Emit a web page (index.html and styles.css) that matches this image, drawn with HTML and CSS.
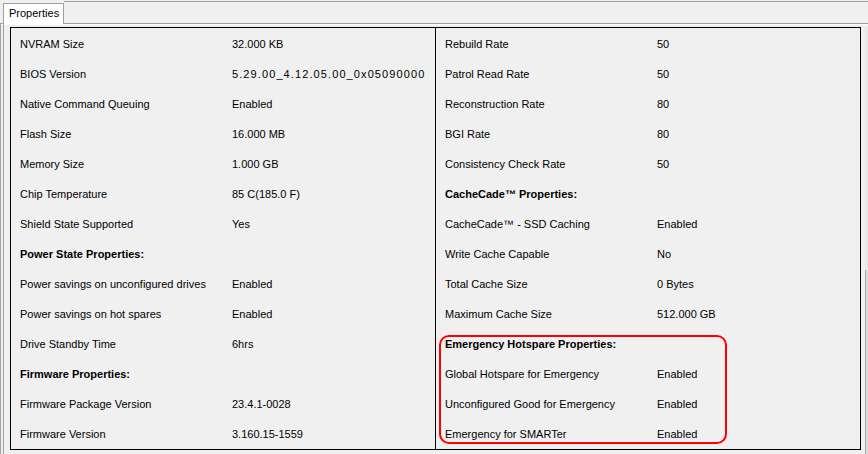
FILE: index.html
```html
<!DOCTYPE html>
<html>
<head>
  <meta charset="utf-8">
  <link rel="stylesheet" href="styles.css">
</head>
<body>
  <div class="tabs">
    <div class="tab">Properties</div>
    <div class="tab-fill"></div>
  </div>
  <div class="frame">
    <div class="frame-in">
      <div class="panel">
        <div class="col">
          <div class="row"><span class="key">NVRAM Size</span><span>32.000 KB</span></div>
          <div class="row"><span class="key">BIOS Version</span><span class="wide">5.29.00_4.12.05.00_0x05090000</span></div>
          <div class="row"><span class="key">Native Command Queuing</span><span>Enabled</span></div>
          <div class="row"><span class="key">Flash Size</span><span>16.000 MB</span></div>
          <div class="row"><span class="key">Memory Size</span><span>1.000 GB</span></div>
          <div class="row"><span class="key">Chip Temperature</span><span>85 C(185.0 F)</span></div>
          <div class="row"><span class="key">Shield State Supported</span><span>Yes</span></div>
          <div class="row head">Power State Properties:</div>
          <div class="row"><span class="key">Power savings on unconfigured drives</span><span>Enabled</span></div>
          <div class="row"><span class="key">Power savings on hot spares</span><span>Enabled</span></div>
          <div class="row"><span class="key">Drive Standby Time</span><span>6hrs</span></div>
          <div class="row head">Firmware Properties:</div>
          <div class="row"><span class="key">Firmware Package Version</span><span>23.4.1-0028</span></div>
          <div class="row"><span class="key">Firmware Version</span><span>3.160.15-1559</span></div>
        </div>
        <div class="col right">
          <div class="row"><span class="key">Rebuild Rate</span><span>50</span></div>
          <div class="row"><span class="key">Patrol Read Rate</span><span>50</span></div>
          <div class="row"><span class="key">Reconstruction Rate</span><span>80</span></div>
          <div class="row"><span class="key">BGI Rate</span><span>80</span></div>
          <div class="row"><span class="key">Consistency Check Rate</span><span>50</span></div>
          <div class="row head">CacheCade™ Properties:</div>
          <div class="row"><span class="key">CacheCade™ - SSD Caching</span><span>Enabled</span></div>
          <div class="row"><span class="key">Write Cache Capable</span><span>No</span></div>
          <div class="row"><span class="key">Total Cache Size</span><span>0 Bytes</span></div>
          <div class="row"><span class="key">Maximum Cache Size</span><span>512.000 GB</span></div>
          <div class="row head">Emergency Hotspare Properties:</div>
          <div class="row"><span class="key">Global Hotspare for Emergency</span><span>Enabled</span></div>
          <div class="row"><span class="key">Unconfigured Good for Emergency</span><span>Enabled</span></div>
          <div class="row"><span class="key">Emergency for SMARTer</span><span>Enabled</span></div>
        </div>
        <div class="mark"></div>
      </div>
      <div class="scroll"><div class="thumb"></div></div>
    </div>
  </div>
</body>
</html>
```

FILE: styles.css
```css
html {background: #f0f0f0;}
body {margin: 0; font-family: "Liberation Sans", Arial, sans-serif; font-size: 11px; color: #000; width: 868px; height: 454px; overflow: hidden;}

.tabs {display: flex; height: 23px; border-bottom: 1px solid #a0a0a0; box-shadow: 0 1px 0 #fcfcfc;}
.tab {margin: 3px 0 -1px 3px; height: 20px; padding: 0 4px 0 5px; line-height: 19px; background: #fff; border: 1px solid #a0a0a0; border-bottom: none;}
.tab-fill {flex: 1; margin-top: 1px; border-top: 1px solid #a0a0a0;}

.frame {border-left: 1px solid #a0a0a0; height: 430px;}
.frame-in {display: flex; margin-left: 2px; border-left: 1px solid #a0a0a0; height: 430px; padding-top: 3px; box-sizing: border-box;}

.panel {position: relative; display: flex; margin-left: 6px; width: 849px; height: 421px; border: 1px solid #000;}
.col {width: 424px; padding-top: 1px; padding-left: 9px; box-sizing: border-box;}
.col.right {width: 425px; border-left: 1px solid #000; padding-left: 9px;}
.row {display: flex; height: 30px; line-height: 30px; white-space: nowrap;}
.key {width: 212px; flex: none;}
.head {font-weight: bold;}
.wide {letter-spacing: 1.1px;}

.mark {position: absolute; left: 428px; top: 307px; width: 284px; height: 105px; border: 2px solid #f00; border-radius: 10px;}

.scroll {margin-left: 4px; width: 3px; background: #e8e8e8; display: flex; flex-direction: column; justify-content: flex-end;}
.thumb {height: 184px; border-left: 1px solid #a8a8a8; background: #dcdcdc;}
```
